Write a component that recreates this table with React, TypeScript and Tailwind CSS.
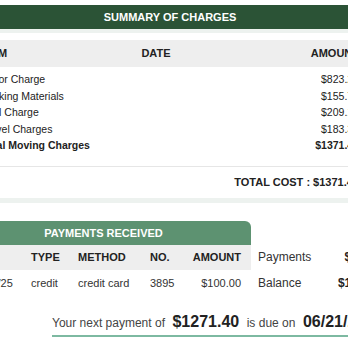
import React from 'react'

const charges = [
  { item: 'Labor Charge', amount: '$823.20' },
  { item: 'Packing Materials', amount: '$155.75' },
  { item: 'Fuel Charge', amount: '$209.10' },
  { item: 'Travel Charges', amount: '$183.35' },
]

export default function App() {
  return (
    <div
      className="w-[348px] h-[348px] overflow-hidden bg-white text-[#222]"
      style={{ fontFamily: '"Liberation Sans", Arial, sans-serif' }}
    >
      <div className="pt-[5px]">
        {/* Summary of charges */}
        <div className="ml-[-27px] w-[394px]">
          <div className="h-[24px] bg-[#2b5336] flex items-center justify-center text-[11px] font-bold text-white">
            SUMMARY OF CHARGES
          </div>
          <div className="border-t-4 border-b-[5px] border-[#edf2ef] pt-[7px]">
            <div className="h-[27px] bg-[#eeeeee] px-2 grid grid-cols-[150px_50px_1fr] items-center text-[11px] font-bold">
              <span>ITEM</span>
              <span className="text-center">DATE</span>
              <span className="text-right">AMOUNT</span>
            </div>
            <div className="pt-[4px] px-2 text-[10.5px] leading-[16.6px]">
              {charges.map((c) => (
                <div key={c.item} className="grid grid-cols-[150px_50px_1fr]">
                  <span>{c.item}</span>
                  <span></span>
                  <span className="text-right">{c.amount}</span>
                </div>
              ))}
              <div className="grid grid-cols-[150px_50px_1fr] font-bold">
                <span>Total Moving Charges</span>
                <span></span>
                <span className="text-right">$1371.40</span>
              </div>
            </div>
            <div className="mt-[12px] border-t border-[#e6e6e6] h-[32px] px-2 flex items-center justify-end text-[11px] font-bold">
              TOTAL COST : $1371.40
            </div>
          </div>
        </div>

        {/* Payments received */}
        <div className="mt-[18px] ml-[-44px] flex">
          <div className="w-[295px] shrink-0">
            <div className="h-[24px] bg-[#5d9271] rounded-tr-[6px] flex items-center justify-center text-[11px] font-bold text-white">
              PAYMENTS RECEIVED
            </div>
            <div className="h-[25px] bg-[#eeeeee] pl-[14px] pr-[10px] grid grid-cols-[61px_47px_72px_42px_1fr] items-center text-[11px] font-bold">
              <span>DATE</span>
              <span>TYPE</span>
              <span>METHOD</span>
              <span>NO.</span>
              <span className="text-right">AMOUNT</span>
            </div>
            <div className="h-[27px] pl-[14px] pr-[10px] grid grid-cols-[61px_47px_72px_42px_1fr] items-center text-[11px] text-[#333]">
              <span>05/22/25</span>
              <span>credit</span>
              <span>credit card</span>
              <span>3895</span>
              <span className="text-right">$100.00</span>
            </div>
          </div>
          <div className="pt-[24px] pl-[7px] w-[137px] shrink-0 text-[12px] text-[#333]">
            <div className="h-[25px] flex items-center justify-between">
              <span>Payments</span>
              <span className="font-bold text-[#222]">$100.00</span>
            </div>
            <div className="h-[27px] flex items-center justify-between">
              <span>Balance</span>
              <span className="font-bold text-[#222]">$1271.40</span>
            </div>
          </div>
        </div>

        {/* Next payment */}
        <div className="mt-[13px] ml-[52px] w-[360px] border-b-2 border-[#7db9a1] pb-[1px] flex items-baseline gap-[7.5px] whitespace-nowrap">
          <span className="text-[12px] text-[#444]">Your next payment of</span>
          <span className="text-[16px] font-bold text-[#222]">$1271.40</span>
          <span className="text-[12px] text-[#444]">is due on</span>
          <span className="text-[16px] font-bold text-[#222]">06/21/2025</span>
        </div>
      </div>
    </div>
  )
}
